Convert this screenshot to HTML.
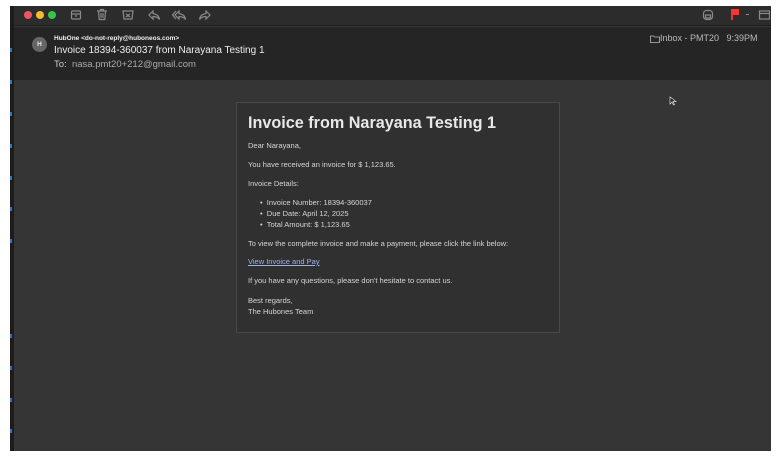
<!DOCTYPE html>
<html><head><meta charset="utf-8"><style>
*{margin:0;padding:0;box-sizing:border-box}
html,body{width:783px;height:460px;background:#fff;overflow:hidden;font-family:"Liberation Sans",Arial,sans-serif}
#win{position:absolute;left:10px;top:6px;width:761px;height:445px;background:#353535;overflow:hidden}
#side{position:absolute;left:0;top:0;width:4px;height:445px;background:#1c1c1c}
.dot{position:absolute;left:0;width:2px;height:4px;background:#2f6fd0}
#tb{position:absolute;left:4px;top:0;right:0;height:20px;background:#2c2c2c;border-bottom:1px solid #1e1e1e}
#hd{position:absolute;left:4px;top:21px;right:0;height:53px;background:#252525}
.c{position:absolute;top:5px;width:8px;height:8px;border-radius:50%}
svg{position:absolute}
.t{position:absolute;white-space:nowrap;color:#ddd}
#card{position:absolute;left:226px;top:96px;width:324px;height:231px;background:#303030;border:1px solid #474747}
#card .t{font-size:7.5px;color:#d6d6d6;left:11px}
</style></head><body>
<div id="win">
<div id="side">
<div class="dot" style="top:42px"></div><div class="dot" style="top:74px"></div><div class="dot" style="top:106px"></div><div class="dot" style="top:138px"></div><div class="dot" style="top:170px"></div><div class="dot" style="top:201px"></div><div class="dot" style="top:233px"></div><div class="dot" style="top:328px"></div><div class="dot" style="top:360px"></div><div class="dot" style="top:392px"></div><div class="dot" style="top:423px"></div>
</div>
<div id="tb">
<div class="c" style="left:10px;background:#f0545c"></div>
<div class="c" style="left:22px;background:#f5b82e"></div>
<div class="c" style="left:34px;background:#33c748"></div>
<svg style="left:56px;top:3px" width="12" height="12" viewBox="0 0 12 12" fill="none" stroke="#8a8a8a" stroke-width="1.2"><rect x="1.5" y="2" width="9" height="8" rx="1"/><path d="M1.5 5h9M5 7h2"/></svg>
<svg style="left:82px;top:2px" width="12" height="13" viewBox="0 0 12 13" fill="none" stroke="#8a8a8a" stroke-width="1.2"><path d="M1 3h10M4.5 3V1.5h3V3M2.5 3l.7 8.5h5.6L9.5 3M5 5v5M7 5v5"/></svg>
<svg style="left:108px;top:3px" width="12" height="12" viewBox="0 0 12 12" fill="none" stroke="#8a8a8a" stroke-width="1.2"><path d="M1 2h10l-1 8H2z M4 5l4 3M8 5l-4 3"/></svg>
<svg style="left:134px;top:3px" width="13" height="12" viewBox="0 0 13 12" fill="none" stroke="#8a8a8a" stroke-width="1.2"><path d="M5 2L1 6l4 4V7.5c3 0 5 1 6.5 3C11 7 9 5 5 4.5z"/></svg>
<svg style="left:158px;top:3px" width="15" height="12" viewBox="0 0 15 12" fill="none" stroke="#8a8a8a" stroke-width="1.2"><path d="M4 2L0.5 6 4 10M7 2L3 6l4 4V7.5c3 0 5 1 6.5 3C13 7 11 5 7 4.5z"/></svg>
<svg style="left:184px;top:3px" width="13" height="12" viewBox="0 0 13 12" fill="none" stroke="#8a8a8a" stroke-width="1.2"><path d="M8 2l4 4-4 4V7.5c-3 0-5 1-6.5 3C2 7 4 5 8 4.5z"/></svg>
<svg style="left:688px;top:3px" width="12" height="12" viewBox="0 0 12 12" fill="none" stroke="#8a8a8a" stroke-width="1.2"><rect x="1.5" y="1.5" width="9" height="9" rx="3"/><path d="M3.5 6h5v3h-5z"/></svg>
<div style="position:absolute;left:717px;top:3px;width:1.5px;height:11px;background:#e33"></div>
<div style="position:absolute;left:718px;top:3px;width:7px;height:6px;background:#f33"></div>
<div style="position:absolute;left:732px;top:8px;width:3px;height:1px;background:#888"></div>
<svg style="left:744px;top:3px" width="12" height="12" viewBox="0 0 12 12" fill="none" stroke="#8a8a8a" stroke-width="1.2"><rect x="1.5" y="2" width="10" height="8"/><path d="M1.5 4.5h10"/></svg>
</div>
<div id="hd">
<div style="position:absolute;left:18px;top:10px;width:15px;height:15px;border-radius:50%;background:#666;color:#eee;font-size:6.5px;font-weight:bold;text-align:center;line-height:15px">H</div>
<div class="t" style="left:40px;top:8px;font-size:6.5px;font-weight:bold;color:#eee">HubOne &lt;do-not-reply@huboneos.com&gt;</div>
<div class="t" style="left:40px;top:18px;font-size:10px;color:#eee">Invoice 18394-360037 from Narayana Testing 1</div>
<div class="t" style="left:40px;top:32px;font-size:9.5px;color:#ccc">To:&nbsp; <span style="color:#aaa">nasa.pmt20+212@gmail.com</span></div>
<svg style="left:636px;top:8px" width="10" height="8" viewBox="0 0 10 8" fill="none" stroke="#bbb" stroke-width=".8"><path d="M.5 1h3l1 1h5v5.5h-9z"/></svg>
<div class="t" style="left:646px;top:6px;font-size:9px;color:#bbb">Inbox - PMT20&nbsp;&nbsp;&nbsp;9:39PM</div>
</div>
<svg style="left:659px;top:90px" width="8" height="10" viewBox="0 0 8 10"><path d="M1 1v7l2-2 1.5 3 1-.5L4 5.5h3z" fill="#222" stroke="#ddd" stroke-width=".7"/></svg>
<div id="card">
<div class="t" style="top:11px;font-size:16.2px;font-weight:bold;color:#e8e8e8;left:11px">Invoice from Narayana Testing 1</div>
<div class="t" style="top:38px">Dear Narayana,</div>
<div class="t" style="top:57px">You have received an invoice for $ 1,123.65.</div>
<div class="t" style="top:76px">Invoice Details:</div>
<div class="t" style="top:95px;left:23px">•&nbsp;&nbsp;Invoice Number: 18394-360037</div>
<div class="t" style="top:106px;left:23px">•&nbsp;&nbsp;Due Date: April 12, 2025</div>
<div class="t" style="top:117px;left:23px">•&nbsp;&nbsp;Total Amount: $ 1,123.65</div>
<div class="t" style="top:136px">To view the complete invoice and make a payment, please click the link below:</div>
<div class="t" style="top:154px;color:#9ab4e8;text-decoration:underline">View Invoice and Pay</div>
<div class="t" style="top:173px">If you have any questions, please don't hesitate to contact us.</div>
<div class="t" style="top:193px">Best regards,</div>
<div class="t" style="top:204px">The Hubones Team</div>
</div>
</div>
</body></html>
